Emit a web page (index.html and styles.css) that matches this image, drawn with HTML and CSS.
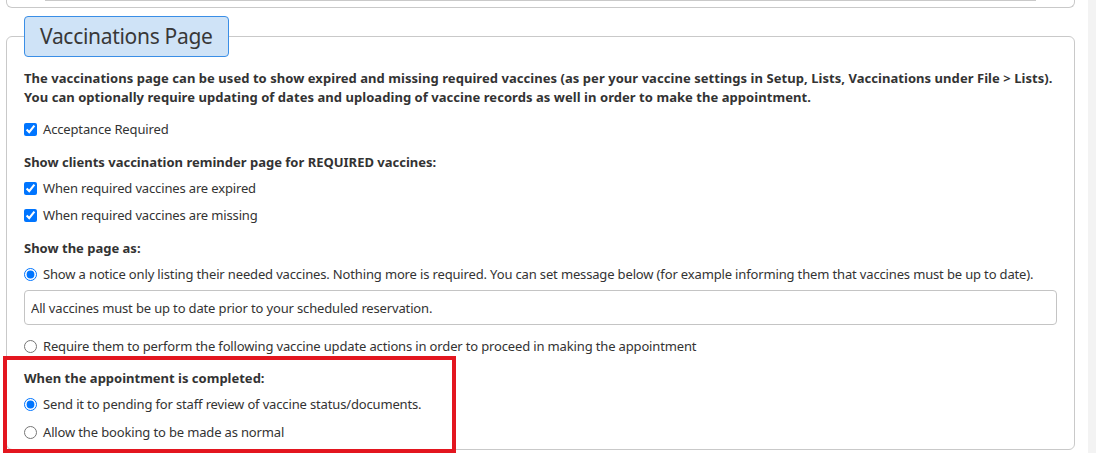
FILE: index.html
```html
<!DOCTYPE html>
<html>
<head>
<meta charset="utf-8">
<link rel="stylesheet" href="styles.css">
</head>
<body>
<div class="page">
  <div class="main">
    <div class="prev-card"><div class="prev-inner"></div></div>
    <fieldset class="card">
      <legend class="legend">Vaccinations Page</legend>
      <p class="intro">The vaccinations page can be used to show expired and missing required vaccines (as per your vaccine settings in Setup, Lists, Vaccinations under File &gt; Lists).<br>You can optionally require updating of dates and uploading of vaccine records as well in order to make the appointment.</p>
      <label class="row r-accept"><input type="checkbox" checked><span>Acceptance Required</span></label>
      <div class="heading h-show">Show clients vaccination reminder page for REQUIRED vaccines:</div>
      <label class="row r-first"><input type="checkbox" checked><span>When required vaccines are expired</span></label>
      <label class="row r-next"><input type="checkbox" checked><span>When required vaccines are missing</span></label>
      <div class="heading h-page">Show the page as:</div>
      <label class="row r-first"><input type="radio" name="mode" checked><span>Show a notice only listing their needed vaccines. Nothing more is required. You can set message below (for example informing them that vaccines must be up to date).</span></label>
      <input class="msg" type="text" value="All vaccines must be up to date prior to your scheduled reservation.">
      <label class="row r-require"><input type="radio" name="mode"><span>Require them to perform the following vaccine update actions in order to proceed in making the appointment</span></label>
      <div class="heading h-done">When the appointment is completed:</div>
      <label class="row r-first"><input type="radio" name="done" checked><span>Send it to pending for staff review of vaccine status/documents.</span></label>
      <label class="row r-last"><input type="radio" name="done"><span>Allow the booking to be made as normal</span></label>
    </fieldset>
  </div>
  <div class="scrollbar"></div>
  <div class="highlight"></div>
</div>
</body>
</html>
```

FILE: styles.css
```css
html, body {
  margin: 0;
  padding: 0;
  background: #fff;
}
body {
  font-family: "Noto Sans", "Open Sans", sans-serif;
  font-size: 13px;
  color: #333;
  overflow: hidden;
}
.page {
  position: relative;
  display: flex;
  width: 1096px;
  height: 453px;
  overflow: hidden;
}
.main {
  width: 1069px;
  margin-left: 6px;
}
.prev-card {
  height: 7px;
  border: 1px solid #c9c9c9;
  border-top: none;
  border-radius: 0 0 6px 6px;
  padding: 0 38px;
}
.prev-inner {
  height: 0;
  border-bottom: 1px solid #c9c9c9;
}
.card {
  margin: 8px 0 0 0;
  padding: 0 17px 7px 17px;
  border: 1px solid #c9c9c9;
  border-radius: 6px;
  min-width: 0;
}
.legend {
  margin-left: 0;
  padding: 0 15px;
  height: 39px;
  line-height: 38px;
  font-size: 21px;
  letter-spacing: -0.3px;
  color: #383838;
  background: #cfe3f7;
  border: 1px solid #3a8ee6;
  border-radius: 4px;
  box-sizing: content-box;
}
.intro {
  margin: 12px 0 0 0;
  font-weight: bold;
  line-height: 19px;
  letter-spacing: 0.05px;
}
.row {
  display: flex;
  align-items: center;
  height: 19px;
  line-height: 19px;
  white-space: nowrap;
  letter-spacing: -0.15px;
}
.row input {
  width: 13px;
  height: 13px;
  margin: 0 6px 0 0;
  accent-color: #0075ff;
}
.heading {
  font-weight: bold;
  line-height: 19px;
  height: 19px;
}
.r-accept { margin-top: 13px; }
.h-show { margin-top: 14px; }
.r-first { margin-top: 7px; }
.r-next { margin-top: 8px; }
.h-page { margin-top: 14px; }
.msg {
  display: block;
  box-sizing: border-box;
  width: 100%;
  height: 35px;
  margin: 6px 0 0 0;
  padding: 0 6px;
  border: 1px solid #c4c4c4;
  border-radius: 4px;
  font: inherit;
  letter-spacing: -0.15px;
  color: #333;
}
.r-require { margin-top: 12px; }
.h-done { margin-top: 13px; }
.r-last { margin-top: 9px; }
.scrollbar {
  width: 8px;
  margin-left: 13px;
  background: #f3f3f3;
}
.highlight {
  position: absolute;
  left: 3px;
  top: 356px;
  width: 445px;
  height: 89px;
  border: 4px solid #e3161f;
}
```
